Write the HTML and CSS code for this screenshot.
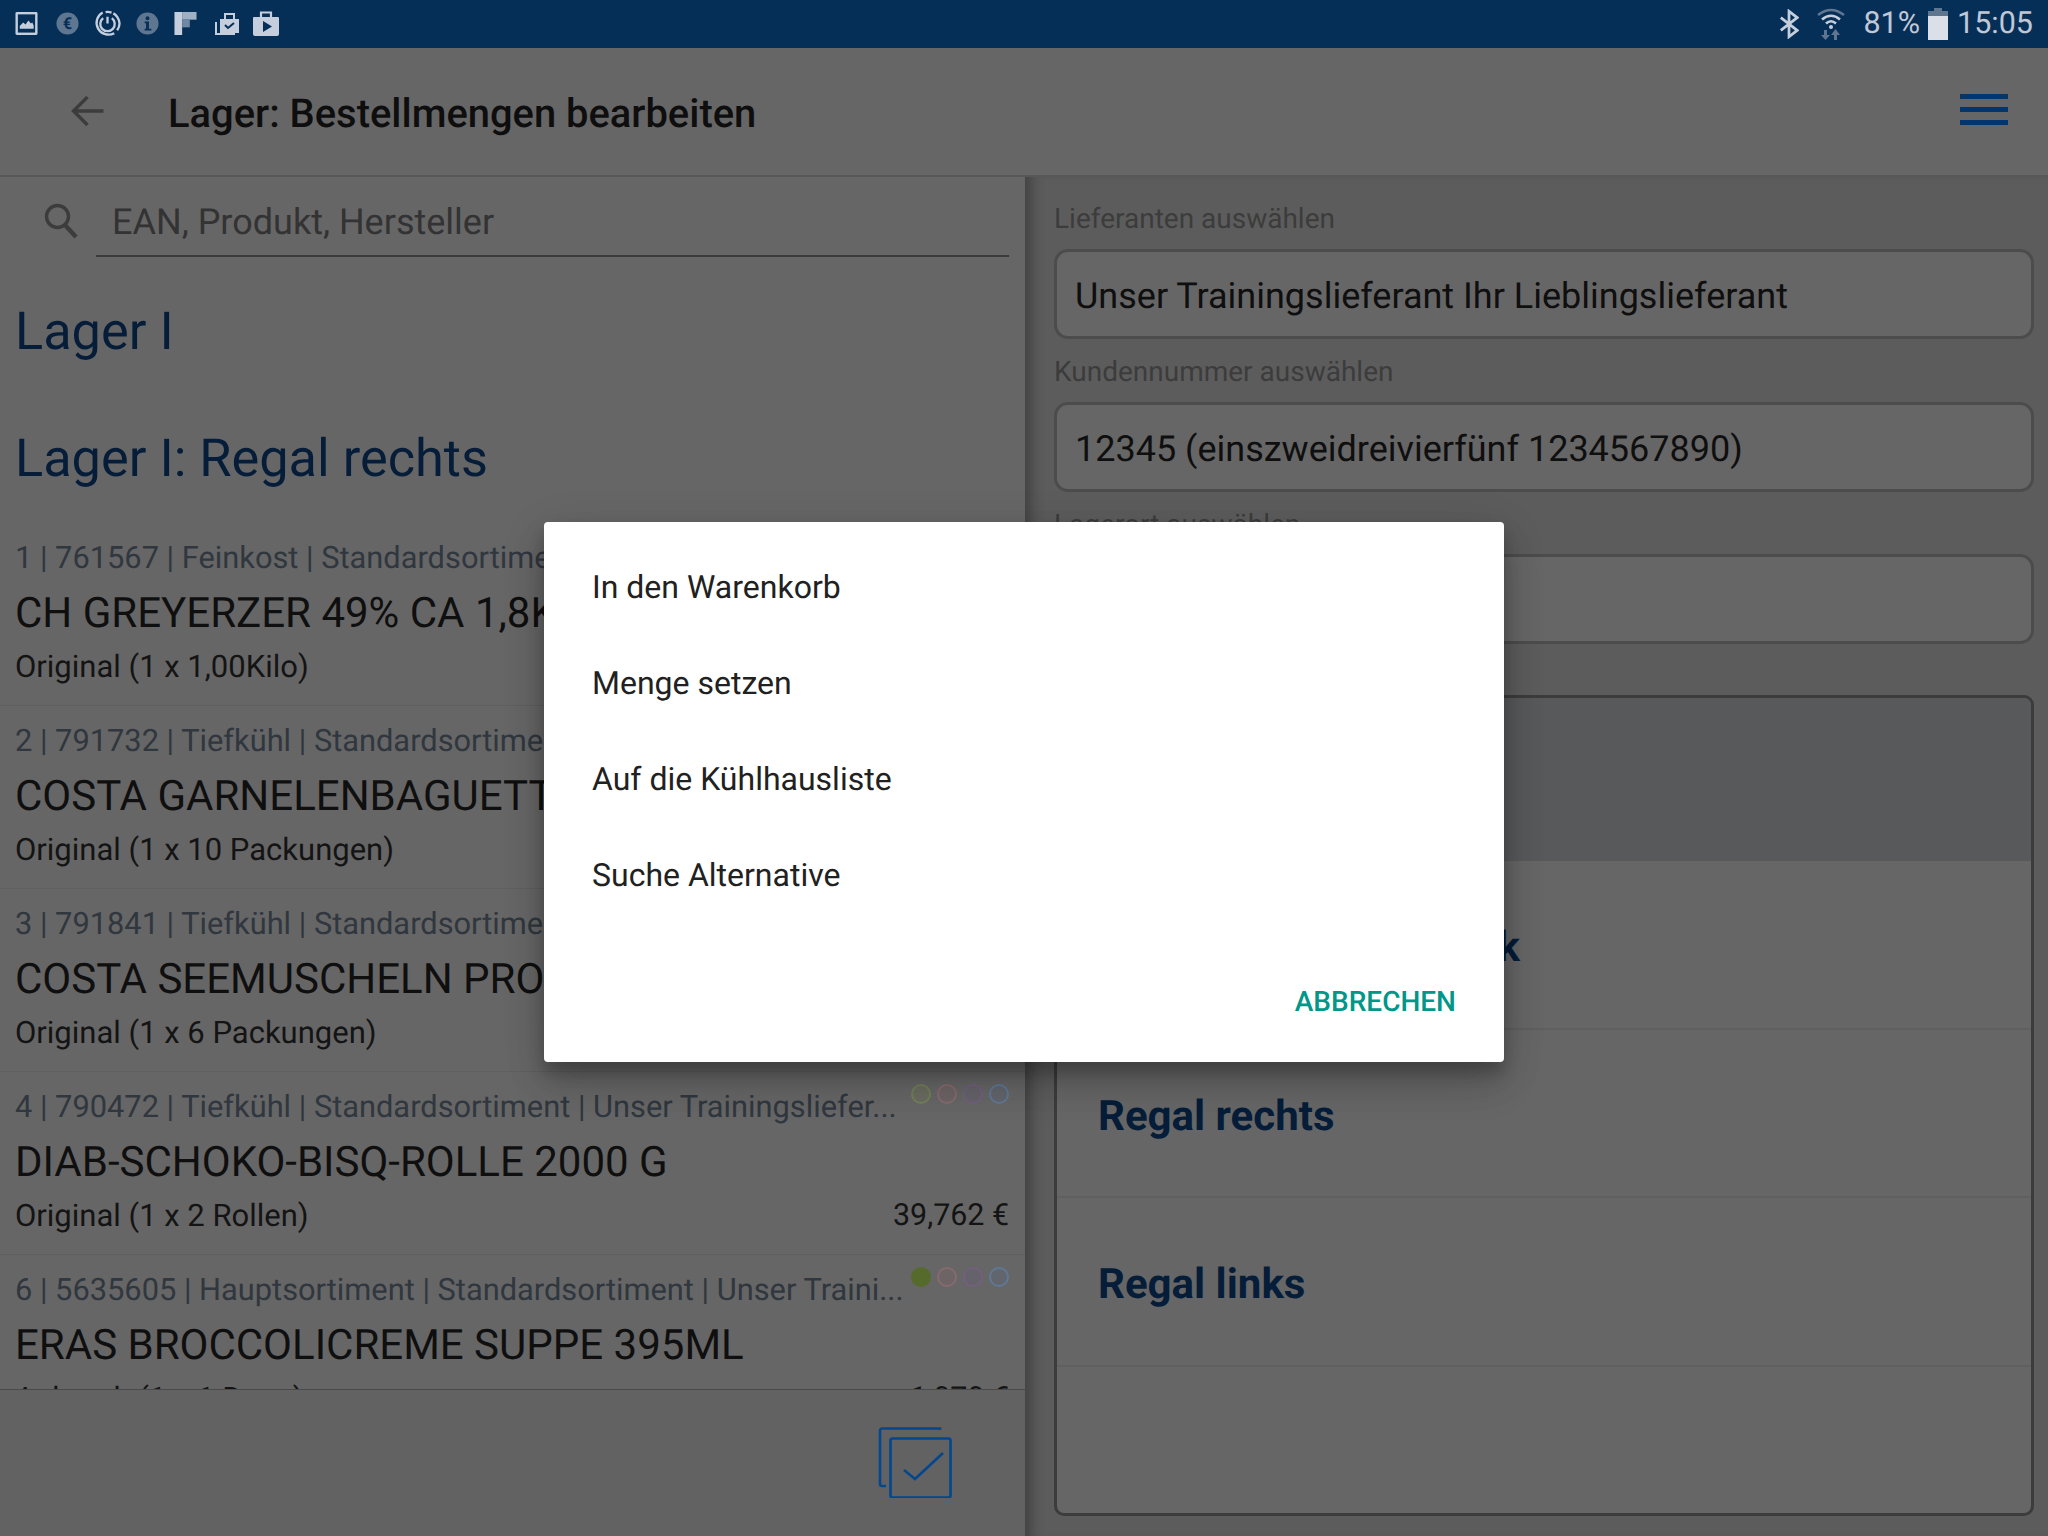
FILE: index.html
```html
<!DOCTYPE html>
<html lang="de">
<head>
<meta charset="utf-8">
<title>Lager: Bestellmengen bearbeiten</title>
<link rel="stylesheet" href="styles.css">
</head>
<body>
<div class="statusbar">
  <div class="status-icons">
    <svg class="si si-image" viewBox="0 0 24 24"><rect x="0.5" y="0.5" width="23" height="24" rx="1.5" fill="#c5cedc"/><rect x="3" y="3" width="18" height="19" fill="#062f57"/><path d="M5 18v-3l3.500-3.500 2.500 2 3-4 2.500 3 1.500-1 1.500 3v3.500z" fill="#c5cedc"/></svg>
    <svg class="si si-euro" viewBox="0 0 24 24"><circle cx="12" cy="12" r="11.500" fill="#5f7691"/><text x="12" y="18" class="si-glyph">€</text></svg>
    <svg class="si si-power" viewBox="0 0 28 28"><path d="M9 2.500A12 12 0 1 0 21 24" fill="none" stroke="#c5cedc" stroke-width="2.400"/><path d="M24 21A12 12 0 0 0 12 2.200" fill="none" stroke="#c5cedc" stroke-width="2.400" stroke-dasharray="20 2 30"/><path d="M9.500 8.500A7.500 7.500 0 1 0 18.500 8.500" fill="none" stroke="#c5cedc" stroke-width="2.400"/><path d="M14 7v7" stroke="#c5cedc" stroke-width="2.400"/></svg>
    <svg class="si si-info" viewBox="0 0 24 24"><circle cx="12" cy="12" r="11.500" fill="#5f7691"/><circle cx="12" cy="6.500" r="2" fill="#062f57"/><path d="M9 10h4.500v7.500H16v1.800H9v-1.800h1.500v-5.700H9z" fill="#062f57"/></svg>
    <svg class="si si-flag" viewBox="0 0 23 24"><rect x="0" y="0" width="8" height="24" fill="#c5cedc"/><rect x="8" y="0" width="15" height="8" fill="#9fb0c5"/><rect x="8" y="8" width="8" height="8" fill="#6f88a4"/></svg>
    <svg class="si si-case" viewBox="0 0 26 26"><path d="M7 9h19v14H7z" fill="#c5cedc"/><path d="M12 9V4h9v5" fill="none" stroke="#c5cedc" stroke-width="2"/><path d="M3 12v12h19" fill="none" stroke="#c5cedc" stroke-width="2"/><path d="M12 15l3 3 6-5" fill="none" stroke="#062f57" stroke-width="2"/></svg>
    <svg class="si si-bag" viewBox="0 0 26 26"><path d="M1 7h24a1 1 0 0 1 1 1v16a2 2 0 0 1-2 2H2a2 2 0 0 1-2-2V8a1 1 0 0 1 1-1z" fill="#c5cedc"/><path d="M8 8V2.500h10V8" fill="none" stroke="#c5cedc" stroke-width="2.200"/><path d="M10 11l9 5.500-9 5.500z" fill="#062f57"/></svg>
  </div>
  <div class="status-right">
    <svg class="si-bt" viewBox="0 0 22 32"><path d="M2 9l18 14-9 7V2l9 7L2 23" fill="none" stroke="#c5cedc" stroke-width="3"/></svg>
    <svg class="si-wifi" viewBox="0 0 28 32"><path d="M1 7Q14-3 27 7" fill="none" stroke="#5f7691" stroke-width="2.600"/><path d="M5 11.500Q14 4 23 11.500" fill="none" stroke="#c5cedc" stroke-width="2.600"/><path d="M9 15.500Q14 11 19 15.500" fill="none" stroke="#c5cedc" stroke-width="2.600"/><circle cx="14" cy="19" r="2" fill="#c5cedc"/><path d="M10 22v5h3l-4.500 5-4.500-5h3v-5z" fill="#5f7691"/><path d="M20 32v-5h3l-4.500-6-4.500 6h3v5z" fill="#5f7691"/></svg>
    <span class="status-pct">81%</span>
    <svg class="si-batt" viewBox="0 0 20 32"><rect x="6" y="0" width="8" height="3" fill="#5f7691"/><rect x="0" y="3" width="20" height="6" fill="#5f7691"/><rect x="0" y="8" width="20" height="24" fill="#dbe0e8"/></svg>
    <span class="status-time">15:05</span>
  </div>
</div>

<header class="appbar">
  <svg class="back" viewBox="0 0 32 32"><path d="M32 16H3M16 2L2 16l14 14" fill="none" stroke="#3c3c3c" stroke-width="3.400"/></svg>
  <h1 class="title">Lager: Bestellmengen bearbeiten</h1>
  <div class="burger"><span></span><span></span><span></span></div>
</header>

<main class="main">
  <section class="left">
    <div class="search">
      <svg class="search-icon" viewBox="0 0 34 36"><circle cx="13.500" cy="13.500" r="11" fill="none" stroke="#3c3c3c" stroke-width="3.400"/><path d="M21 22l11 12" stroke="#3c3c3c" stroke-width="4.400"/></svg>
      <div class="search-field">EAN, Produkt, Hersteller</div>
    </div>
    <h2 class="group">Lager I</h2>
    <h2 class="group group-second">Lager I: Regal rechts</h2>
    <div class="list">
      <article class="item">
        <div class="meta-row"><span class="meta">1 | 761567 | Feinkost | Standardsortiment</span></div>
        <div class="name">CH GREYERZER 49% CA 1,8KG</div>
        <div class="row3"><span>Original (1 x 1,00Kilo)</span></div>
      </article>
      <article class="item">
        <div class="meta-row"><span class="meta">2 | 791732 | Tiefkühl | Standardsortiment</span></div>
        <div class="name">COSTA GARNELENBAGUETTE</div>
        <div class="row3"><span>Original (1 x 10 Packungen)</span></div>
      </article>
      <article class="item">
        <div class="meta-row"><span class="meta">3 | 791841 | Tiefkühl | Standardsortiment</span></div>
        <div class="name">COSTA SEEMUSCHELN PRO</div>
        <div class="row3"><span>Original (1 x 6 Packungen)</span></div>
      </article>
      <article class="item">
        <div class="meta-row"><span class="meta">4 | 790472 | Tiefkühl | Standardsortiment | Unser Trainingsliefer...</span>
          <span class="dots"><i class="dot d-green"></i><i class="dot d-pink"></i><i class="dot d-purple"></i><i class="dot d-blue"></i></span></div>
        <div class="name">DIAB-SCHOKO-BISQ-ROLLE 2000 G</div>
        <div class="row3"><span>Original (1 x 2 Rollen)</span><span class="price">39,762 €</span></div>
      </article>
      <article class="item">
        <div class="meta-row"><span class="meta">6 | 5635605 | Hauptsortiment | Standardsortiment | Unser Traini...</span>
          <span class="dots"><i class="dot d-fill"></i><i class="dot d-pink"></i><i class="dot d-purple"></i><i class="dot d-blue"></i></span></div>
        <div class="name">ERAS BROCCOLICREME SUPPE 395ML</div>
        <div class="row3"><span>Anbruch (1 x 1 Dose)</span><span class="price">1,070 €</span></div>
      </article>
    </div>
    <footer class="left-foot">
      <svg class="check-all" viewBox="0 0 74 72"><path d="M62 4V2.500H4a2 2 0 0 0-2 2V58a2 2 0 0 0 2 2h4" fill="none" stroke="#03478f" stroke-width="2.600"/><rect x="12.500" y="12.500" width="60" height="59" rx="2" fill="none" stroke="#03478f" stroke-width="2.600"/><path d="M26 44l11 9 28-26" fill="none" stroke="#03478f" stroke-width="2.600"/></svg>
    </footer>
  </section>

  <section class="right">
    <label class="field-label">Lieferanten auswählen</label>
    <div class="field">Unser Trainingslieferant Ihr Lieblingslieferant</div>
    <label class="field-label">Kundennummer auswählen</label>
    <div class="field">12345 (einszweidreivierfünf 1234567890)</div>
    <label class="field-label field-label-third">Lagerort auswählen</label>
    <div class="field"></div>
    <div class="places">
      <div class="place place-selected"></div>
      <div class="place">Regal M Tiefkühlblock</div>
      <div class="place">Regal rechts</div>
      <div class="place">Regal links</div>
    </div>
  </section>
</main>

<div class="dialog">
  <ul class="dialog-list">
    <li>In den Warenkorb</li>
    <li>Menge setzen</li>
    <li>Auf die Kühlhausliste</li>
    <li>Suche Alternative</li>
  </ul>
  <div class="dialog-actions"><span class="dialog-btn">ABBRECHEN</span></div>
</div>
</body>
</html>
```

FILE: styles.css
```css
* { box-sizing: border-box; }
html, body { margin: 0; padding: 0; }
body {
  width: 2048px;
  height: 1536px;
  position: relative;
  overflow: hidden;
  background: #666;
  font-family: Roboto, "Noto Sans", sans-serif;
  color: #141414;
  display: flex;
  flex-direction: column;
  text-rendering: geometricPrecision;
}

/* status bar */
.statusbar {
  height: 48px;
  flex: none;
  background: #062f57;
  display: flex;
  align-items: center;
  justify-content: space-between;
  padding: 0 15px 0 15px;
  color: #c0c8d6;
}
.status-icons { display: flex; align-items: center; padding-bottom: 2px; }
.si { display: block; flex: none; }
.si-image { width: 23px; height: 24px; margin-right: 18px; }
.si-euro { width: 23px; height: 23px; margin-right: 15px; }
.si-power { width: 27px; height: 27px; margin-right: 15px; }
.si-info { width: 23px; height: 23px; margin-right: 15px; }
.si-flag { width: 23px; height: 23px; margin-right: 16px; }
.si-case { width: 26px; height: 26px; margin-right: 14px; }
.si-bag { width: 26px; height: 26px; }
.si-glyph { font-family: Roboto, sans-serif; font-size: 17px; font-weight: 700; fill: #062f57; text-anchor: middle; }
.status-right { display: flex; align-items: center; }
.si-bt { width: 20px; height: 30px; margin-right: 18px; }
.si-wifi { width: 28px; height: 32px; margin-right: 18px; }
.status-pct { font-size: 30.500px; margin-right: 8px; line-height: 48px; }
.si-batt { width: 20px; height: 32px; margin-right: 9px; }
.status-time { font-size: 30.500px; line-height: 50px; }

/* app bar */
.appbar {
  height: 129px;
  flex: none;
  display: flex;
  align-items: center;
  padding: 0 40px 2px 71px;
  border-bottom: 2px solid #585858;
}
.back { width: 33px; height: 32px; flex: none; }
.title { margin: 7px 0 0 64px; font-size: 39.900px; font-weight: 500; color: #0e0e0e; flex: 1; line-height: 50px; }
.burger { width: 48px; display: flex; flex-direction: column; gap: 8px; margin-top: -2px; }
.burger span { display: block; height: 5px; background: #03356f; }

.main { flex: 1; display: flex; min-height: 0; }

/* left column */
.left { width: 1025px; flex: none; display: flex; flex-direction: column; min-height: 0; }
.search { height: 80px; flex: none; display: flex; align-items: flex-start; padding: 26px 16px 0 44px; }
.search-icon { width: 34px; height: 36px; flex: none; }
.search-field {
  flex: 1;
  margin-left: 18px;
  margin-top: -26px;
  height: 80px;
  padding: 24px 0 0 16px;
  font-size: 36px;
  line-height: 42px;
  color: #333;
  border-bottom: 2px solid #3a3a3a;
}
.group { margin: 44px 0 0; padding-left: 15px; font-size: 52.300px; font-weight: 400; line-height: 60px; color: #051d38; }
.group-second { margin-top: 67px; }

.list { flex: 1; min-height: 0; overflow: hidden; margin-top: 35px; }
.item { height: 183px; padding: 13px 16px 0 15px; border-bottom: 1px solid #5f5f5f; }
.meta-row { height: 44px; display: flex; align-items: center; justify-content: space-between; }
.meta { font-size: 30.800px; line-height: 44px; color: #30373e; white-space: nowrap; }
.dots { display: flex; gap: 6px; margin-top: -26px; flex: none; }
.dot { display: block; width: 20px; height: 20px; border-radius: 50%; border: 2.500px solid; }
.d-green { border-color: #727f58; background: #6a6c60; }
.d-fill { background: #566b2b; border-color: #566b2b; }
.d-pink { border-color: #866a6e; background: #6c6465; }
.d-purple { border-color: #72607e; background: #66626a; }
.d-blue { border-color: #5f7896; background: #62666c; }
.name { font-size: 42px; line-height: 68px; margin-bottom: -2px; color: #0f0f0f; white-space: nowrap; }
.row3 { display: flex; justify-content: space-between; font-size: 31px; line-height: 42px; color: #141414; white-space: nowrap; }
.price { font-size: 30.400px; }

.left-foot {
  height: 147px;
  flex: none;
  background: #626262;
  border-top: 1px solid #4a4a4a;
  display: flex;
  align-items: flex-start;
  padding: 36px 0 0 878px;
}
.check-all { width: 74px; height: 72px; display: block; }

/* right column */
.right {
  flex: 1;
  min-width: 0;
  background: #5c5c5c;
  box-shadow: inset 16px 0 14px -10px rgba(0, 0, 0, .3);
  padding: 22px 14px 0 29px;
  display: flex;
  flex-direction: column;
}
.field-label { font-size: 28px; line-height: 40px; color: #3c3c3c; height: 50px; padding-top: 0; }
.field {
  height: 90px;
  flex: none;
  background: #666;
  border: 3px solid #4c4c4c;
  border-radius: 14px;
  display: flex;
  align-items: center;
  padding: 4px 0 0 18px;
  font-size: 36px;
  color: #0f0f0f;
  margin-bottom: 13px;
}
.field-label-third { height: 49px; }
.places {
  margin-top: 38px;
  height: 821px;
  flex: none;
  background: #666;
  border: 3px solid #3c3c3c;
  border-radius: 10px;
  overflow: hidden;
}
.place {
  height: 168.500px;
  display: flex;
  align-items: center;
  padding: 7px 0 0 41px;
  border-bottom: 2px solid #5f5f5f;
  font-size: 42px;
  font-weight: 700;
  color: #051d38;
  white-space: nowrap;
}
.place-selected { height: 163px; background: #58595b; border-bottom: 0; }

/* dialog */
.dialog {
  position: absolute;
  left: 544px;
  top: 522px;
  width: 960px;
  height: 540px;
  background: #fff;
  border-radius: 4px;
  box-shadow: 0 24px 38px rgba(0, 0, 0, .14), 0 9px 46px rgba(0, 0, 0, .12), 0 11px 15px rgba(0, 0, 0, .2);
  padding-top: 17px;
}
.dialog-list { list-style: none; margin: 0; padding: 0; }
.dialog-list li { height: 96px; line-height: 96px; padding-left: 48px; font-size: 32px; color: #212121; }
.dialog-actions { display: flex; justify-content: flex-end; padding: 61px 48px 0 0; }
.dialog-btn { font-size: 28px; font-weight: 500; line-height: 36px; color: #009688; }
```
